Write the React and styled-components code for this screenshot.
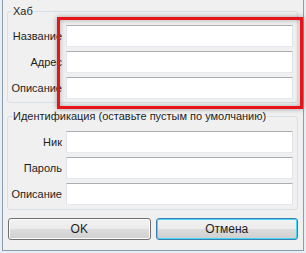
import React from 'react';
import styled, { createGlobalStyle } from 'styled-components';

const GlobalStyle = createGlobalStyle`
    html, body {
        margin: 0;
        padding: 0;
        background: #e9eef3;
    }
    body {
        font-family: "Liberation Sans", Arial, sans-serif;
        font-size: 11px;
        color: #1e1e1e;
    }
`;

const Screen = styled.div`
    position: relative;
    width: 306px;
    height: 253px;
    padding-left: 2px;
    box-sizing: border-box;
`;

const Window = styled.div`
    width: 302px;
    height: 251px;
    box-sizing: border-box;
    background: #f0f0f0;
    border: 1px solid #8a9cae;
    border-top: none;
    padding: 4px 5px 0 4px;
    display: flex;
    flex-direction: column;
`;

const Group = styled.fieldset`
    margin: ${p => p.$top || 0}px 0 0 0;
    padding: 0 4px ${p => p.$bottom || 3}px 0;
    border: 1px solid #d5dfe5;
    border-radius: 3px;
    min-width: 0;
    display: flex;
    flex-direction: column;
    & > legend {
        margin-left: 4px;
        padding: 0 1px;
        line-height: 14px;
        color: #1e1e1e;
    }
`;

const Rows = styled.div`
    display: flex;
    flex-direction: column;
    gap: 4px;
    padding-top: ${p => p.$pad}px;
`;

const Row = styled.label`
    display: flex;
    align-items: center;
    gap: 4px;
    height: 22px;
`;

const Caption = styled.span`
    width: 54px;
    text-align: right;
    white-space: nowrap;
`;

const Field = styled.input`
    flex: 1;
    height: 22px;
    box-sizing: border-box;
    margin: 0;
    background: #fff;
    border: 1px solid #e2e3ea;
    border-top-color: #abadb3;
    border-bottom-color: #e3e9ef;
    outline: none;
`;

const Buttons = styled.div`
    display: flex;
    gap: 5px;
    margin-top: 8px;
    padding-left: 1px;
`;

const Button = styled.button`
    flex: 1;
    height: 22px;
    margin: 0;
    font: inherit;
    font-size: 12px;
    color: #1e1e1e;
    border: 1px solid ${p => (p.$focused ? '#3c7fb1' : '#707070')};
    border-radius: 3px;
    background: linear-gradient(#f2f2f2 0%, #ebebeb 50%, #dddddd 50%, #cfcfcf 100%);
    box-shadow: inset 0 0 0 1px ${p => (p.$focused ? '#48d6f7' : '#fcfcfc')};
`;

const Highlight = styled.div`
    position: absolute;
    left: 57px;
    top: 17px;
    width: 246px;
    height: 92px;
    box-sizing: border-box;
    border: 3px solid #e8141b;
    box-shadow: 0 0 5px rgba(0, 0, 0, 0.35), inset 0 0 5px rgba(0, 0, 0, 0.3);
    pointer-events: none;
`;

const App = () => (
    <Screen>
        <GlobalStyle />
        <Window>
            <Group $bottom={3}>
                <legend>Хаб</legend>
                <Rows $pad={7}>
                    <Row><Caption>Название</Caption><Field /></Row>
                    <Row><Caption>Адрес</Caption><Field /></Row>
                    <Row><Caption>Описание</Caption><Field /></Row>
                </Rows>
            </Group>
            <Group $top={6} $bottom={4}>
                <legend>Идентификация (оставьте пустым по умолчанию)</legend>
                <Rows $pad={8}>
                    <Row><Caption>Ник</Caption><Field /></Row>
                    <Row><Caption>Пароль</Caption><Field /></Row>
                    <Row><Caption>Описание</Caption><Field /></Row>
                </Rows>
            </Group>
            <Buttons>
                <Button>OK</Button>
                <Button $focused>Отмена</Button>
            </Buttons>
        </Window>
        <Highlight />
    </Screen>
);

export default App;
